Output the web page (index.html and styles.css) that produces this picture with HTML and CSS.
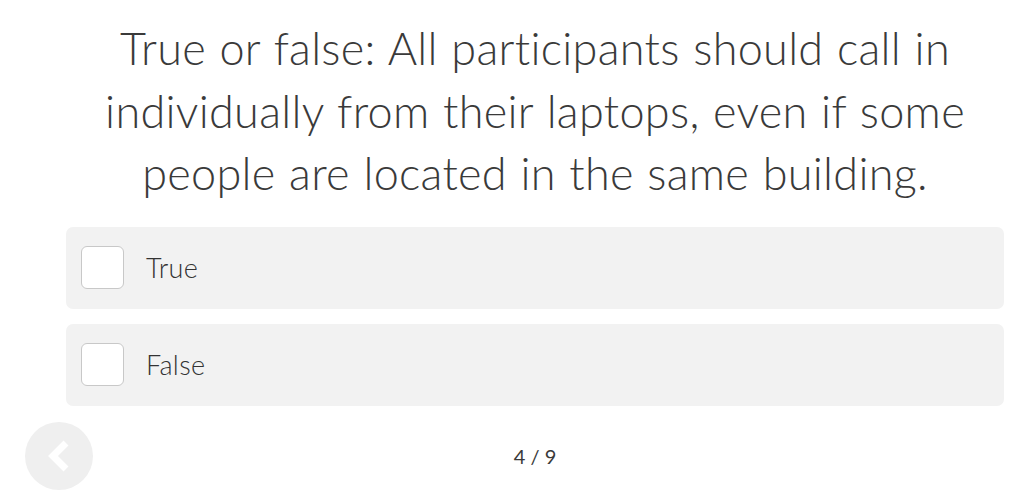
FILE: index.html
```html
<!DOCTYPE html>
<html>
<head>
<meta charset="utf-8">
<link rel="stylesheet" href="styles.css">
</head>
<body>
<div class="page">
  <h1 class="question">True or false: All participants should call in individually from their laptops, even if some people are located in the same building.</h1>
  <div class="options">
    <label class="option"><span class="box"></span><span class="label">True</span></label>
    <label class="option"><span class="box"></span><span class="label">False</span></label>
  </div>
  <div class="footer">
    <button class="back" aria-label="Back">
      <svg width="30" height="36" viewBox="0 0 30 36"><path d="M22 5 L9 18 L22 31" fill="none" stroke="#fff" stroke-width="7" stroke-linecap="butt" stroke-linejoin="miter"/></svg>
    </button>
    <div class="progress">4 / 9</div>
  </div>
</div>
</body>
</html>
```
FILE: styles.css
```css
html, body { margin: 0; padding: 0; background: #fff; }
body { font-family: Lato, "Open Sans", sans-serif; color: #3a3a3a; }
.page { width: 1024px; height: 504px; box-sizing: border-box; padding: 17px 20px 0 66px; position: relative; }
.question { margin: 0; font-weight: 300; font-size: 45px; line-height: 62.5px; text-align: center; padding: 0 30px; letter-spacing: 0.3px; word-spacing: 1px; }
.options { display: flex; flex-direction: column; gap: 15px; margin-top: 22px; }
.option { display: flex; align-items: center; height: 82px; background: #f2f2f2; border-radius: 7px; padding-left: 15px; }
.box { width: 41px; height: 41px; background: #fff; border: 1px solid #c8c8c8; border-radius: 6px; flex: none; }
.label { font-size: 27px; font-weight: 300; margin-left: 22px; color: #333; letter-spacing: 0.3px; }
.footer { display: flex; justify-content: center; align-items: center; margin-top: 16px; height: 68px; position: relative; }
.back { position: absolute; left: -41px; top: 0; width: 68px; height: 68px; border-radius: 50%; background: #efefef; border: none; padding: 0; display: flex; align-items: center; justify-content: center; }
.progress { font-size: 20px; color: #3a3a3a; }
```
